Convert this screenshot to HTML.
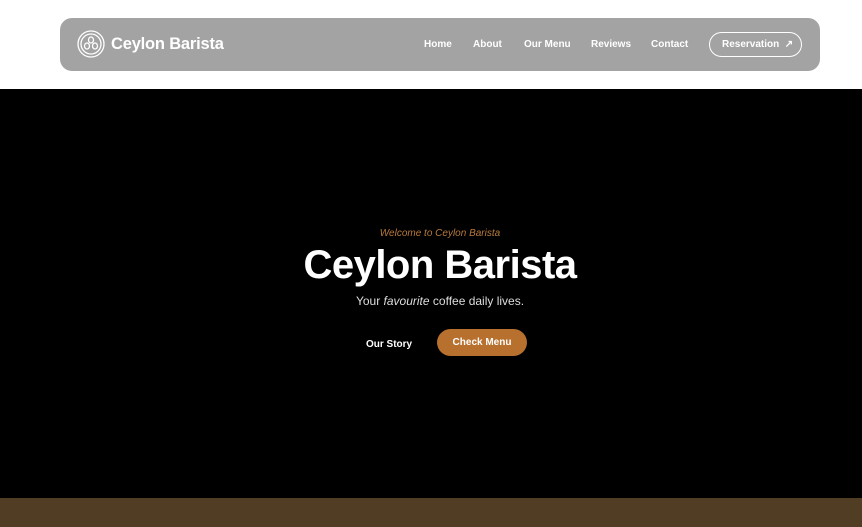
<!DOCTYPE html>
<html><head><style>
*{margin:0;padding:0;box-sizing:border-box}
body{width:862px;height:527px;overflow:hidden;background:#fff;font-family:"Liberation Sans",sans-serif;position:relative}
.nav{position:absolute;left:60px;top:18px;width:760px;height:53px;background:#a3a3a3;border-radius:12px}
.logo{position:absolute;left:17px;top:12px;width:28px;height:28px}
.brand{position:absolute;left:51px;top:17px;color:#fff;font-weight:bold;font-size:16.5px;letter-spacing:-0.2px}
.links a{position:absolute;top:21px;color:#fff;font-weight:bold;font-size:10px;text-decoration:none}
.res{position:absolute;left:649px;top:14px;width:93px;height:25px;border:1.3px solid #fff;border-radius:13px;color:#fff;font-weight:bold;font-size:10px;padding:6px 0 0 12px}
.hero{position:absolute;left:0;top:89px;width:862px;height:409px;background:#000}
.bot{position:absolute;left:0;top:498px;width:862px;height:29px;background:#513c24}
.c{position:absolute;left:9px;width:862px;text-align:center}
</style></head><body>
<div class="nav">
<svg class="logo" viewBox="0 0 28 28" fill="none" stroke="#fff" stroke-width="1.3"><circle cx="14" cy="14" r="13"/><circle cx="14" cy="14" r="10"/><ellipse cx="14" cy="10" rx="2.5" ry="3"/><ellipse cx="10" cy="16" rx="2.5" ry="3"/><ellipse cx="18" cy="16" rx="2.5" ry="3"/></svg>
<div class="brand">Ceylon Barista</div>
<div class="links"><a style="left:364px">Home</a><a style="left:413px">About</a><a style="left:464px">Our Menu</a><a style="left:531px">Reviews</a><a style="left:591px">Contact</a></div>
<div class="res">Reservation &nbsp;↗</div>
</div>
<div class="hero"></div>
<div class="c" style="top:228px;color:#b87a3c;font-style:italic;font-size:10px">Welcome to Ceylon Barista</div>
<div class="c" style="top:243px;color:#fff;font-weight:bold;font-size:40px;letter-spacing:-0.5px">Ceylon Barista</div>
<div class="c" style="top:294px;color:#ddd;font-size:12px">Your <i>favourite</i> coffee daily lives.</div>
<div style="position:absolute;left:366px;top:339px;color:#fff;font-weight:bold;font-size:10px">Our Story</div>
<div style="position:absolute;left:437px;top:329px;width:90px;height:27px;background:#b8702e;border-radius:14px;color:#fff;font-weight:bold;font-size:10px;text-align:center;line-height:27px">Check Menu</div>
<div class="bot"></div>
</body></html>
